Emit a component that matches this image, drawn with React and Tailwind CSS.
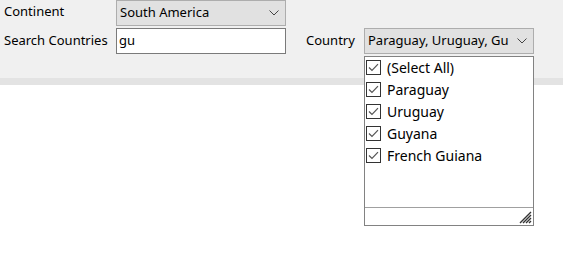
import React from 'react';

const countries = ['(Select All)', 'Paraguay', 'Uruguay', 'Guyana', 'French Guiana'];

function Chevron() {
  return (
    <svg width="10" height="6" viewBox="0 0 10 6" className="shrink-0">
      <path d="M0.5 0.5 L5 5 L9.5 0.5" fill="none" stroke="#444" strokeWidth="1" />
    </svg>
  );
}

function Check() {
  return (
    <span className="w-[15px] h-[15px] border border-[#333] bg-white flex items-center justify-center shrink-0">
      <svg width="11" height="9" viewBox="0 0 11 9">
        <path d="M1 4.5 L4 7.5 L10 1.2" fill="none" stroke="#555" strokeWidth="1.2" />
      </svg>
    </span>
  );
}

export default function App() {
  return (
    <div className="w-[563px] h-[258px] bg-white relative overflow-hidden text-[13px] text-black font-['Noto_Sans','Open_Sans',sans-serif]">
      {/* form panel */}
      <div className="h-[78px] bg-[#f0f0f0] flex flex-col gap-[2px]">
        <div className="flex items-center h-[26px]">
          <span className="w-[116px] pl-[4px] -mt-[2px]">Continent</span>
          <div className="w-[170px] h-[26px] border border-[#adadad] bg-[#e1e1e1] flex items-center justify-between pl-[3px] pr-[6px]">
            <span>South America</span>
            <Chevron />
          </div>
        </div>
        <div className="flex items-center h-[26px]">
          <span className="w-[116px] pl-[4px]">Search Countries</span>
          <div className="w-[170px] h-[26px] border border-[#7a7a7a] bg-white flex items-center pl-[2px]">gu</div>
          <span className="ml-[20px] w-[58px]">Country</span>
          <div className="w-[170px] h-[26px] border border-[#adadad] bg-[#e1e1e1] flex items-center justify-between pl-[3px] pr-[6px]">
            <span className="whitespace-nowrap overflow-hidden w-[146px]">Paraguay, Uruguay, Gu</span>
            <Chevron />
          </div>
        </div>
      </div>
      <div className="h-[7px] bg-[#e3e3e3]" />

      {/* dropdown list */}
      <div className="absolute left-[364px] top-[56px] w-[170px] h-[170px] border border-[#828282] bg-white flex flex-col text-[14px]">
        <div className="flex-1 flex flex-col -mt-px">
          {countries.map((c) => (
            <div key={c} className="h-[22px] flex items-center gap-[6px] pl-[1px]">
              <Check />
              <span>{c}</span>
            </div>
          ))}
        </div>
        <div className="h-[18px] border-t border-[#a0a0a0] flex justify-end items-end pr-[1px] pb-[1px]">
          <svg width="13" height="13" viewBox="0 0 13 13">
            <path d="M12 1 L1 12 M12 4 L4 12 M12 7 L7 12 M12 10 L10 12" stroke="#333" strokeWidth="1.4" />
          </svg>
        </div>
      </div>
    </div>
  );
}
